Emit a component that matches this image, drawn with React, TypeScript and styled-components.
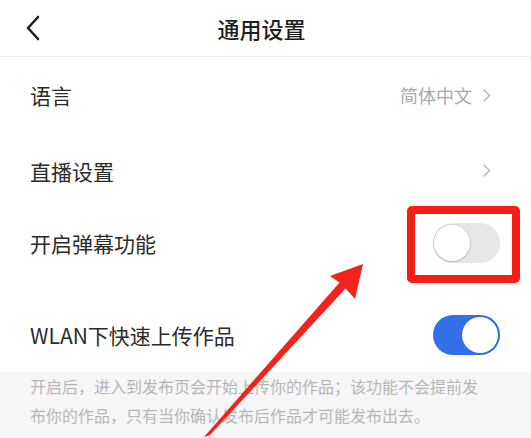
import React from "react";
import styled, { createGlobalStyle } from "styled-components";

const Global = createGlobalStyle`
  html, body { margin: 0; padding: 0; background: #ffffff; }
  body { font-family: "Noto Sans CJK SC", "Noto Sans", sans-serif; }
`;

const Page = styled.div`
  position: relative;
  width: 531px;
  height: 438px;
  overflow: hidden;
  background: #ffffff;
  display: flex;
  flex-direction: column;
`;

const Header = styled.header`
  height: 57px;
  display: grid;
  grid-template-columns: 60px 1fr 68px;
  align-items: center;
  border-bottom: 1px solid #f2f2f2;
  box-sizing: border-box;
`;

const BackBtn = styled.div`
  display: flex;
  align-items: center;
  padding-left: 25px;
  height: 100%;
`;

const Title = styled.h1`
  margin: 0;
  text-align: center;
  font-size: 22px;
  font-weight: 500;
  color: #1f1f1f;
  letter-spacing: 0;
`;

const Row = styled.div<{ $h: number; $pt?: number }>`
  height: ${(p) => p.$h}px;
  padding: ${(p) => p.$pt ?? 0}px 31px 0 30px;
  box-sizing: border-box;
  display: flex;
  align-items: center;
  justify-content: space-between;
`;

const Label = styled.span`
  font-size: 21px;
  color: #2b2b2b;
`;

const Value = styled.span`
  display: flex;
  align-items: center;
  gap: 10px;
  font-size: 18px;
  color: #a9a9a9;
  margin-right: 9px;
`;

const ToggleWrap = styled.div`
  position: relative;
  display: flex;
`;

const Track = styled.div<{ $on: boolean }>`
  width: 67px;
  height: 40px;
  border-radius: 20px;
  background: ${(p) => (p.$on ? "#3370e8" : "#e7e7e7")};
  position: relative;
`;

const Knob = styled.div<{ $on: boolean }>`
  position: absolute;
  top: 2px;
  ${(p) => (p.$on ? "right: 2px;" : "left: 1px;")}
  width: 36px;
  height: 36px;
  border-radius: 50%;
  background: #ffffff;
  box-shadow: ${(p) =>
    p.$on ? "0 0 0 1px #2f68dc" : "0 1px 2px rgba(0,0,0,0.18), 0 0 0 1px #d8d8d8"};
`;

const Highlight = styled.div`
  position: absolute;
  left: -26px;
  top: -17px;
  right: -20px;
  bottom: -20px;
  border: 8px solid #f41d17;
  border-radius: 5px;
`;

const Footer = styled.div`
  flex: 1;
  background: #f6f6f6;
  padding: 0 30px;
`;

const Note = styled.p`
  margin: 0;
  width: 460px;
  font-size: 16px;
  line-height: 29px;
  color: #b6b6b6;
`;

const ArrowLayer = styled.svg`
  position: absolute;
  left: 0;
  top: 0;
  pointer-events: none;
`;

const Chevron = () => (
  <svg width="9" height="15" viewBox="0 0 9 15">
    <polyline points="1.5,1.5 7.5,7.5 1.5,13.5" fill="none" stroke="#b3b3b3" strokeWidth="1.4" />
  </svg>
);

const Toggle = ({ on, highlighted }: { on: boolean; highlighted?: boolean }) => (
  <ToggleWrap>
    <Track $on={on}>
      <Knob $on={on} />
    </Track>
    {highlighted && <Highlight />}
  </ToggleWrap>
);

export default function App() {
  return (
    <Page>
      <Global />
      <Header>
        <BackBtn>
          <svg width="16" height="26" viewBox="0 0 16 26">
            <polyline points="13,2 3,13 13,24" fill="none" stroke="#1f1f1f" strokeWidth="2.6" strokeLinecap="round" strokeLinejoin="round" />
          </svg>
        </BackBtn>
        <Title>通用设置</Title>
        <div />
      </Header>
      <Row $h={76}>
        <Label>语言</Label>
        <Value>
          简体中文
          <Chevron />
        </Value>
      </Row>
      <Row $h={75}>
        <Label>直播设置</Label>
        <Value>
          <Chevron />
        </Value>
      </Row>
      <Row $h={69}>
        <Label>开启弹幕功能</Label>
        <Toggle on={false} highlighted />
      </Row>
      <Row $h={95} $pt={20}>
        <Label>WLAN下快速上传作品</Label>
        <Toggle on />
      </Row>
      <Footer>
        <Note>开启后，进入到发布页会开始上传你的作品；该功能不会提前发布你的作品，只有当你确认发布后作品才可能发布出去。</Note>
      </Footer>
      <ArrowLayer width="531" height="438" viewBox="0 0 531 438">
        <polygon points="204,437 340,282 346,288 210,435" fill="#f2231b" />
        <polygon points="363,264 330,276 340,283 347,290 355,299" fill="#f2231b" />
      </ArrowLayer>
    </Page>
  );
}
